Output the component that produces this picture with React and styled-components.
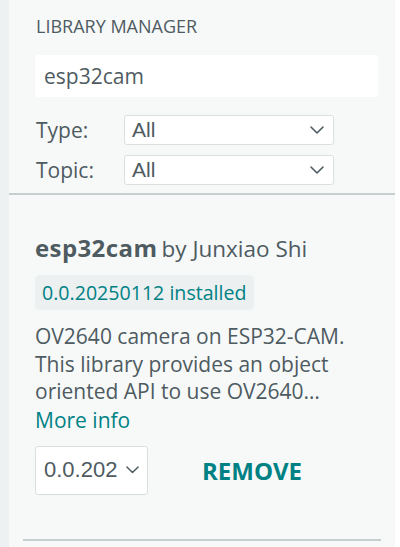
import React from 'react';
import styled, { createGlobalStyle } from 'styled-components';

const GlobalStyle = createGlobalStyle`
  html, body {
    margin: 0;
    padding: 0;
    background: #ffffff;
  }
  * {
    box-sizing: border-box;
  }
`;

const Shell = styled.div`
  display: flex;
  width: 400px;
  height: 547px;
  overflow: hidden;
  background: #ffffff;
  font-family: 'Open Sans', 'Noto Sans', sans-serif;
  color: #4e5b61;
`;

const SideStrip = styled.div`
  width: 9px;
  flex-shrink: 0;
  background: #edf1f1;
`;

const Panel = styled.div`
  width: 386px;
  flex-shrink: 0;
  background: #f7f9f9;
  display: flex;
  flex-direction: column;
`;

const Header = styled.div`
  display: flex;
  flex-direction: column;
  padding: 14px 17px 8px 26px;
  border-bottom: 2px solid #c7cecf;
`;

const PanelTitle = styled.div`
  font-size: 18px;
  line-height: 24px;
  text-transform: uppercase;
  margin-left: 1px;
`;

const SearchInput = styled.div`
  margin-top: 17px;
  height: 42px;
  background: #ffffff;
  border-radius: 3px;
  display: flex;
  align-items: center;
  padding: 0 9px;
  font-size: 21px;
`;

const FilterRow = styled.div`
  display: flex;
  align-items: center;
  margin-top: ${({ $first }) => ($first ? '18px' : '10px')};
`;

const FilterLabel = styled.span`
  width: 88px;
  font-size: 21px;
  line-height: 30px;
  margin-left: 1px;
`;

const SelectBox = styled.div`
  display: flex;
  align-items: center;
  justify-content: space-between;
  width: ${({ $width }) => $width};
  height: ${({ $height }) => $height};
  background: #ffffff;
  border: 1px solid #dae0e1;
  border-radius: 3px;
  padding: ${({ $pad }) => $pad};
  font-family: 'Liberation Sans', Arial, sans-serif;
  font-size: ${({ $size }) => $size};
  color: #4e5b61;
`;

const Card = styled.div`
  display: flex;
  flex-direction: column;
  padding: 38px 17px 0 26px;
`;

const TitleLine = styled.div`
  line-height: 30px;
  white-space: nowrap;
`;

const LibName = styled.span`
  font-weight: 700;
  font-size: 24px;
  letter-spacing: 0.4px;
`;

const Author = styled.span`
  font-weight: 400;
  font-size: 22.5px;
`;

const InstalledBadge = styled.div`
  align-self: flex-start;
  margin-top: 9px;
  height: 35px;
  display: flex;
  align-items: center;
  padding: 0 8px 0 7px;
  background: #ecf0f1;
  border-radius: 5px;
  color: #008184;
  font-size: 19.6px;
`;

const Description = styled.div`
  margin-top: 13px;
  font-size: 21px;
  line-height: 27.5px;
`;

const MoreInfo = styled.a`
  color: #008184;
  font-size: 21px;
  line-height: 28px;
  text-decoration: none;
`;

const Actions = styled.div`
  display: flex;
  align-items: center;
  margin-top: 12px;
`;

const RemoveButton = styled.button`
  margin-left: 54px;
  background: none;
  border: none;
  padding: 0;
  font-family: 'Open Sans', 'Noto Sans', sans-serif;
  font-weight: 700;
  font-size: 24px;
  color: #008184;
`;

const BottomRule = styled.div`
  margin: 44px 14px 0 14px;
  height: 2px;
  background: #c7cecf;
`;

const Chevron = ({ w = 14 }) => (
  <svg width={w} height={w / 2 + 1} viewBox="0 0 14 8" fill="none">
    <polyline points="1,1 7,7 13,1" stroke="#4e5b61" strokeWidth="1.6" strokeLinecap="round" strokeLinejoin="round" />
  </svg>
);

export default function App() {
  return (
    <>
      <GlobalStyle />
      <Shell>
        <SideStrip />
        <Panel>
          <Header>
            <PanelTitle>Library Manager</PanelTitle>
            <SearchInput>esp32cam</SearchInput>
            <FilterRow $first>
              <FilterLabel>Type:</FilterLabel>
              <SelectBox $width="210px" $height="30px" $pad="0 9px 0 7px" $size="21px">
                <span>All</span>
                <Chevron />
              </SelectBox>
            </FilterRow>
            <FilterRow>
              <FilterLabel>Topic:</FilterLabel>
              <SelectBox $width="210px" $height="30px" $pad="0 9px 0 7px" $size="21px">
                <span>All</span>
                <Chevron />
              </SelectBox>
            </FilterRow>
          </Header>
          <Card>
            <TitleLine>
              <LibName>esp32cam</LibName> <Author>by Junxiao Shi</Author>
            </TitleLine>
            <InstalledBadge>0.0.20250112 installed</InstalledBadge>
            <Description>
              OV2640 camera on ESP32-CAM. This library provides an object oriented API to use OV2640…
            </Description>
            <MoreInfo href="#">More info</MoreInfo>
            <Actions>
              <SelectBox $width="113px" $height="49px" $pad="0 8px 0 8px" $size="22px">
                <span>0.0.202</span>
                <Chevron w={13} />
              </SelectBox>
              <RemoveButton>REMOVE</RemoveButton>
            </Actions>
          </Card>
          <BottomRule />
        </Panel>
      </Shell>
    </>
  );
}
